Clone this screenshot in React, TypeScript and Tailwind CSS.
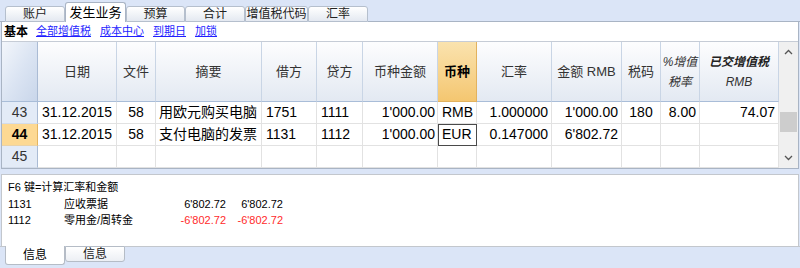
import React from "react";

const font = { fontFamily: '"Liberation Sans", "Noto Sans CJK SC", sans-serif' };

const topTabs = [
  { label: "账户", w: "w-[60px]", active: false },
  { label: "发生业务", w: "w-[61px]", active: true },
  { label: "预算", w: "w-[59px]", active: false },
  { label: "合计", w: "w-[60px]", active: false },
  { label: "增值税代码", w: "w-[63px]", active: false },
  { label: "汇率", w: "w-[60px]", active: false },
];

const align = [
  "justify-center",
  "justify-start pl-[4px]",
  "justify-center",
  "justify-start pl-[3px]",
  "justify-start pl-[4px]",
  "justify-start pl-[4px]",
  "justify-end pr-[2px]",
  "justify-start pl-[4px]",
  "justify-end pr-[3px]",
  "justify-end pr-[3px]",
  "justify-center",
  "justify-end pr-[3px]",
  "justify-end pr-[3px]",
];

const rows = [
  ["43", "31.12.2015", "58", "用欧元购买电脑", "1751", "1111", "1'000.00", "RMB", "1.000000", "1'000.00", "180", "8.00", "74.07"],
  ["44", "31.12.2015", "58", "支付电脑的发票", "1131", "1112", "1'000.00", "EUR", "0.147000", "6'802.72", "", "", ""],
  ["45", "", "", "", "", "", "", "", "", "", "", "", ""],
];

function HeaderCell({ children, orange }: { children?: React.ReactNode; orange?: boolean }) {
  return (
    <div
      className={
        orange
          ? "h-[60px] flex items-center justify-center border-r border-b border-r-[#e2b25e] border-b-[#e2b25e] bg-gradient-to-b from-[#fae3ae] to-[#f4c670] text-[13px] font-bold text-black"
          : "h-[60px] flex items-center justify-center text-center border-r border-b border-r-[#c9d5e5] border-b-[#a9bdd8] bg-gradient-to-b from-[#fdfdfe] to-[#e3e9f2] text-[13px] text-[#333]"
      }
    >
      {children}
    </div>
  );
}

export default function App() {
  return (
    <div className="w-[800px] h-[268px] bg-[#dbe5f7] overflow-hidden flex flex-col" style={font}>
      {/* top tabs */}
      <div className="h-[22px] flex items-end">
        <div className="w-[5px] h-px bg-[#a9b4c4]" />
        {topTabs.map((t) =>
          t.active ? (
            <div
              key={t.label}
              className={`${t.w} h-[20px] bg-white border border-b-0 border-[#a9b4c4] rounded-t-[3px] flex items-center justify-center text-[13px] text-black`}
            >
              {t.label}
            </div>
          ) : (
            <div
              key={t.label}
              className={`${t.w} h-[16px] bg-gradient-to-b from-[#ffffff] to-[#e4e9f1] border border-[#b5bfcd] rounded-t-[3px] flex items-center justify-center text-[12px] text-[#222]`}
            >
              {t.label}
            </div>
          )
        )}
        <div className="flex-1 h-px bg-[#a9b4c4]" />
      </div>

      {/* main panel */}
      <div className="mx-[1px] bg-white border-x border-b border-[#a9b4c4]">
        <div className="h-[20px] flex items-center gap-[9px] pl-[2px] text-[11px] border-b border-[#c6ccd6]">
          <span className="font-bold text-[12px] text-black mr-[-1px]">基本</span>
          <span className="text-[#1f1fff] underline">全部增值税</span>
          <span className="text-[#1f1fff] underline">成本中心</span>
          <span className="text-[#1f1fff] underline">到期日</span>
          <span className="text-[#1f1fff] underline">加锁</span>
        </div>
        <div className="flex">
          <div className="grid grid-cols-[36px_79px_39px_106px_55px_46px_75px_39px_75px_70px_39px_39px_79px] w-[777px] border-r border-[#c8cfd9]">
            <div className="h-[60px] border-r border-b border-r-[#aabbd4] border-b-[#a9bdd8] bg-gradient-to-br from-[#f3f6fb] via-[#dce5f3] to-[#c9d6ea]" />
            <HeaderCell>日期</HeaderCell>
            <HeaderCell>文件</HeaderCell>
            <HeaderCell>摘要</HeaderCell>
            <HeaderCell>借方</HeaderCell>
            <HeaderCell>贷方</HeaderCell>
            <HeaderCell>币种金额</HeaderCell>
            <HeaderCell orange>币种</HeaderCell>
            <HeaderCell>汇率</HeaderCell>
            <HeaderCell>金额 RMB</HeaderCell>
            <HeaderCell>税码</HeaderCell>
            <HeaderCell>
              <span className="italic leading-[20px] text-[12px]">
                %增值
                <br />
                税率
              </span>
            </HeaderCell>
            <HeaderCell>
              <span className="italic leading-[20px] text-[12px]">
                <span className="font-bold text-[#222]">已交增值税</span>
                <br />
                RMB
              </span>
            </HeaderCell>

            {rows.map((r, ri) =>
              r.map((v, ci) => {
                if (ci === 0) {
                  return (
                    <div
                      key={`${ri}-${ci}`}
                      className={
                        ri === 1
                          ? "h-[22px] flex items-center justify-center bg-[#fdd993] border-r border-b border-r-[#e3b562] border-b-[#e9d2a8] text-[14px] font-bold text-black"
                          : "h-[22px] flex items-center justify-center bg-[#e3ebf7] border-r border-b border-r-[#aabbd4] border-b-[#d3dcea] text-[14px] text-[#333]"
                      }
                    >
                      {v}
                    </div>
                  );
                }
                const current = ri === 1 && ci === 7;
                return (
                  <div
                    key={`${ri}-${ci}`}
                    className={`h-[22px] flex items-center ${align[ci]} border-r border-b border-[#e2e2e2] text-[14px] text-black whitespace-nowrap ${
                      current ? "outline outline-1 -outline-offset-1 outline-[#4a4a4a]" : ""
                    }`}
                  >
                    {v}
                  </div>
                );
              })
            )}
          </div>
          {/* scrollbar */}
          <div className="w-[20px] h-[126px] bg-[#f0f0f0] flex flex-col items-center">
            <div className="h-[20px] flex items-center justify-center">
              <svg width="9" height="6" viewBox="0 0 9 6">
                <path d="M1 5 L4.5 1.5 L8 5" fill="none" stroke="#555" strokeWidth="1.3" />
              </svg>
            </div>
            <div className="h-[50px]" />
            <div className="w-[17px] h-[20px] bg-[#cdcdcd]" />
            <div className="flex-1" />
            <div className="h-[20px] flex items-center justify-center">
              <svg width="9" height="6" viewBox="0 0 9 6">
                <path d="M1 1 L4.5 4.5 L8 1" fill="none" stroke="#555" strokeWidth="1.3" />
              </svg>
            </div>
          </div>
        </div>
      </div>

      {/* info panel */}
      <div className="mt-[5px] mx-[1px] h-[72px] bg-white border-x border-t border-[#c3c7cd] pl-[6px] pt-[4px] text-[11px] text-black leading-[16.5px]">
        <div>F6 键=计算汇率和金额</div>
        <div className="grid grid-cols-[56px_92px_70px_57px]">
          <div>1131</div>
          <div>应收票据</div>
          <div className="text-right">6'802.72</div>
          <div className="text-right">6'802.72</div>
          <div>1112</div>
          <div>零用金/周转金</div>
          <div className="text-right text-[#ff2b2b]">-6'802.72</div>
          <div className="text-right text-[#ff2b2b]">-6'802.72</div>
        </div>
      </div>

      {/* bottom tabs */}
      <div className="h-[20px] flex items-start">
        <div className="w-[5px] h-px bg-[#c3c7cd]" />
        <div className="w-[60px] h-[19px] bg-white border border-t-0 border-[#b5bcc6] rounded-b-[3px] flex items-center justify-center text-[12px] text-black">
          信息
        </div>
        <div className="w-[60px] h-[16px] bg-gradient-to-b from-[#ffffff] to-[#eceff4] border border-[#b5bcc6] rounded-b-[3px] flex items-center justify-center text-[12px] text-[#222]">
          信息
        </div>
        <div className="flex-1 h-px bg-[#c3c7cd]" />
      </div>
    </div>
  );
}
